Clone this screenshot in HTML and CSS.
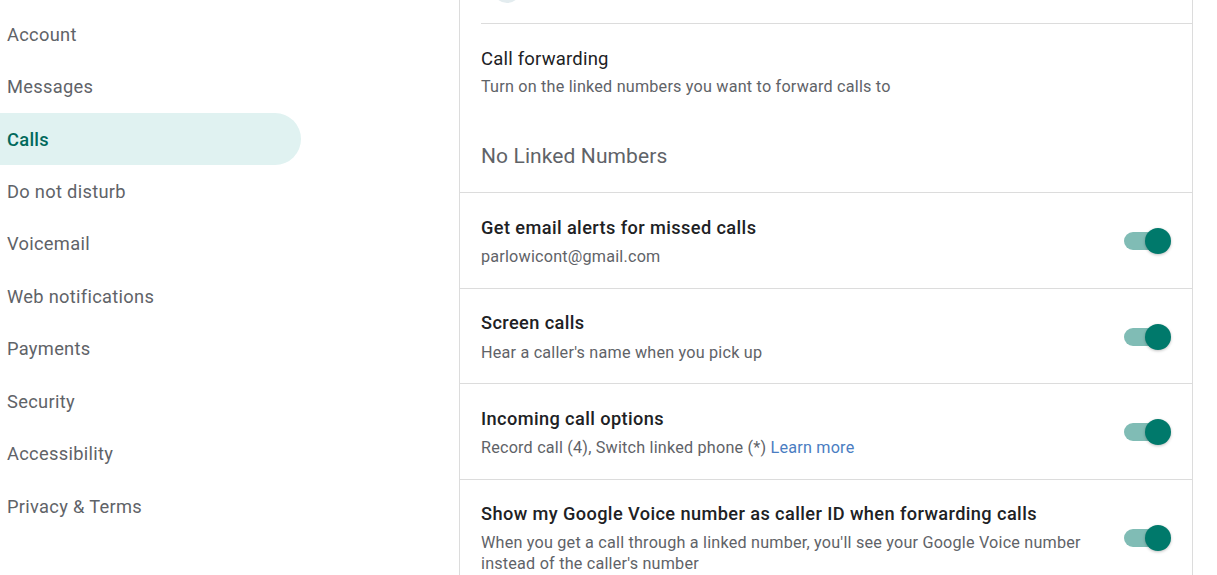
FILE: index.html
```html
<!DOCTYPE html>
<html>
<head>
<meta charset="utf-8">
<link rel="stylesheet" href="styles.css">
</head>
<body>
<div class="page">
  <nav class="sidebar">
    <div class="nav-item">Account</div>
    <div class="nav-item">Messages</div>
    <div class="nav-item active">Calls</div>
    <div class="nav-item">Do not disturb</div>
    <div class="nav-item">Voicemail</div>
    <div class="nav-item">Web notifications</div>
    <div class="nav-item">Payments</div>
    <div class="nav-item">Security</div>
    <div class="nav-item">Accessibility</div>
    <div class="nav-item">Privacy &amp; Terms</div>
  </nav>
  <main class="card">
    <div class="top-row"><span class="avatar"></span></div>
    <section class="forwarding">
      <div class="fw-title">Call forwarding</div>
      <div class="fw-sub">Turn on the linked numbers you want to forward calls to</div>
      <div class="no-linked">No Linked Numbers</div>
    </section>
    <section class="row">
      <div class="row-text">
        <div class="row-title">Get email alerts for missed calls</div>
        <div class="row-sub">parlowicont@gmail.com</div>
      </div>
      <span class="toggle"><span class="track"></span><span class="thumb"></span></span>
    </section>
    <section class="row">
      <div class="row-text">
        <div class="row-title">Screen calls</div>
        <div class="row-sub">Hear a caller's name when you pick up</div>
      </div>
      <span class="toggle"><span class="track"></span><span class="thumb"></span></span>
    </section>
    <section class="row">
      <div class="row-text">
        <div class="row-title">Incoming call options</div>
        <div class="row-sub">Record call (4), Switch linked phone (*) <a class="link" href="#">Learn more</a></div>
      </div>
      <span class="toggle"><span class="track"></span><span class="thumb"></span></span>
    </section>
    <section class="row">
      <div class="row-text">
        <div class="row-title">Show my Google Voice number as caller ID when forwarding calls</div>
        <div class="row-sub">When you get a call through a linked number, you'll see your Google Voice number instead of the caller's number</div>
      </div>
      <span class="toggle"><span class="track"></span><span class="thumb"></span></span>
    </section>
  </main>
</div>
</body>
</html>
```
FILE: styles.css
```css
html, body {
  margin: 0;
  padding: 0;
  background: #fff;
}
body {
  font-family: Roboto, "Noto Sans", Arial, sans-serif;
  color: #202124;
  overflow: hidden;
}
.page {
  display: flex;
  height: 575px;
  overflow: hidden;
}
.sidebar {
  width: 301px;
  padding-top: 8px;
  flex-shrink: 0;
  display: flex;
  flex-direction: column;
}
.nav-item {
  height: 52.45px;
  flex-shrink: 0;
  display: flex;
  align-items: center;
  padding-left: 7px;
  font-size: 18.3px;
  color: #5f6368;
  letter-spacing: 0.3px;
}
.nav-item.active {
  background: #e0f2f1;
  color: #00695c;
  font-weight: 500;
  border-radius: 0 26px 26px 0;
}
.card {
  margin-left: 158px;
  width: 732px;
  border-left: 1px solid #dcdcdc;
  border-right: 1px solid #dcdcdc;
  display: flex;
  flex-direction: column;
}
.top-row {
  height: 23px;
  flex-shrink: 0;
  margin-left: 21px;
  border-bottom: 1px solid #dcdcdc;
  overflow: hidden;
}
.avatar {
  display: block;
  width: 28px;
  height: 28px;
  margin: -25px 0 0 12px;
  border-radius: 50%;
  background: #e3ecef;
}
.forwarding {
  padding: 23px 21px 0;
  height: 168px;
  flex-shrink: 0;
  box-sizing: border-box;
}
.fw-title {
  font-size: 18.5px;
  line-height: 24px;
  letter-spacing: 0.2px;
  color: #202124;
}
.fw-sub {
  margin-top: 6px;
  font-size: 16.2px;
  line-height: 20px;
  letter-spacing: 0.2px;
  color: #5f6368;
}
.no-linked {
  margin-top: 46px;
  font-size: 21px;
  line-height: 26px;
  letter-spacing: 0.1px;
  color: #5f6368;
}
.row {
  border-top: 1px solid #dcdcdc;
  min-height: 95.5px;
  flex-shrink: 0;
  box-sizing: border-box;
  display: flex;
  align-items: center;
  padding: 22px 21px 20px;
}
.row-text {
  flex: 1;
}
.row-title {
  font-size: 18.2px;
  font-weight: 500;
  line-height: 24px;
  letter-spacing: 0.4px;
  color: #202124;
}
.row-sub {
  margin-top: 6.5px;
  font-size: 16.2px;
  line-height: 21px;
  letter-spacing: 0.2px;
  color: #5f6368;
}
.link {
  color: #4a7dc2;
  text-decoration: none;
}
.toggle {
  position: relative;
  width: 47px;
  height: 26px;
  flex-shrink: 0;
  margin-left: 24px;
}
.track {
  position: absolute;
  left: 0;
  top: 4px;
  width: 40px;
  height: 18px;
  border-radius: 9px;
  background: #80bcb5;
}
.thumb {
  position: absolute;
  right: 0;
  top: 0;
  width: 26px;
  height: 26px;
  border-radius: 50%;
  background: #00796b;
  box-shadow: 0 1px 3px rgba(0,0,0,0.25);
}
```
